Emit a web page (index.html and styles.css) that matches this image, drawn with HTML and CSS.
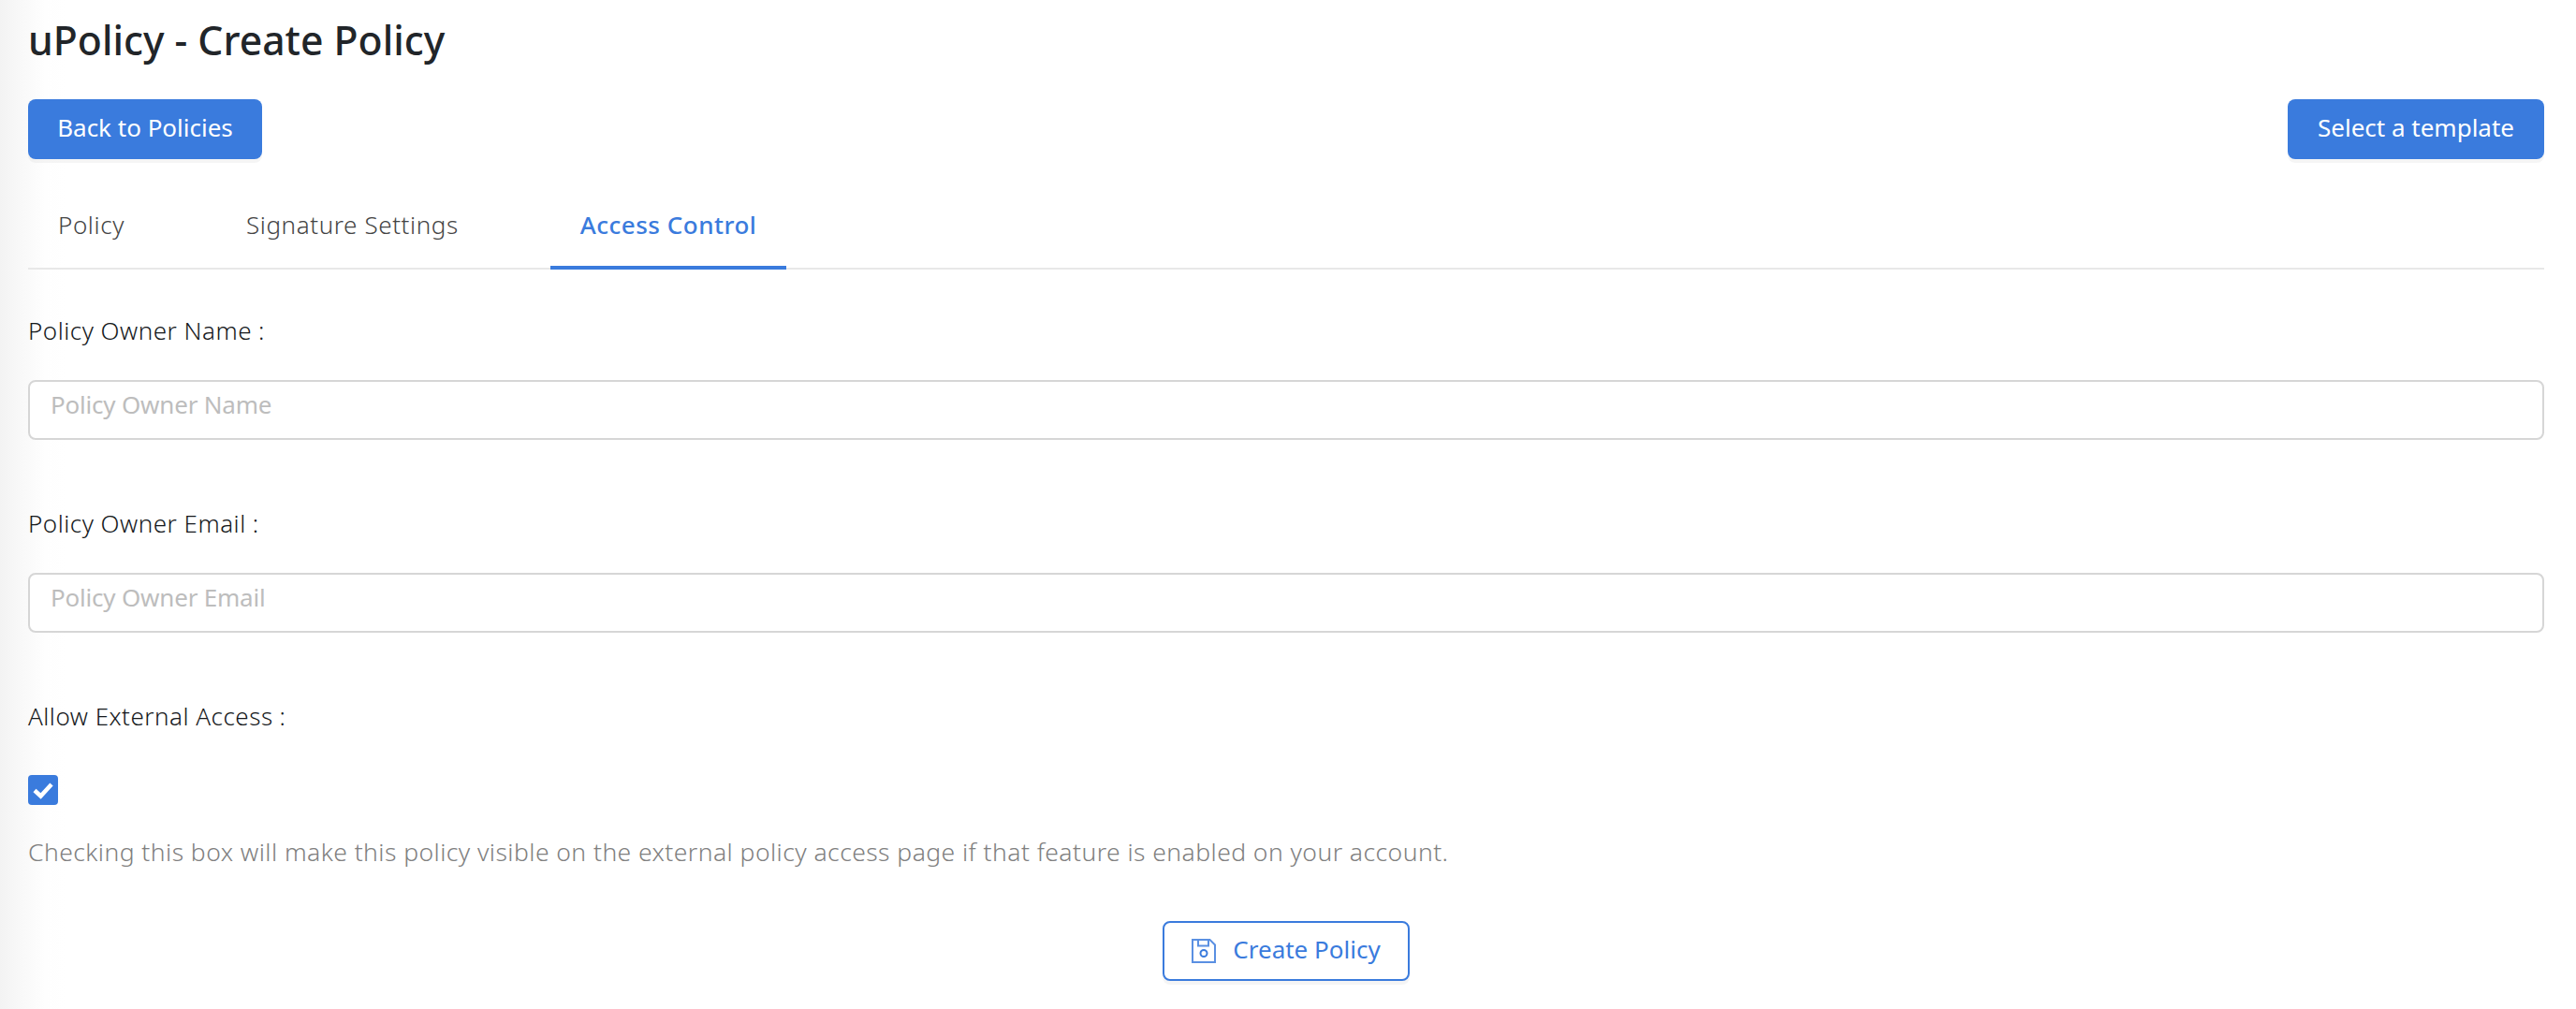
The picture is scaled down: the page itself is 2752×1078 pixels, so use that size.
FILE: index.html
```html
<!DOCTYPE html>
<html lang="en">
<head>
<meta charset="utf-8">
<title>uPolicy - Create Policy</title>
<link rel="stylesheet" href="styles.css">
</head>
<body>
<main class="page">
  <h1 class="title">uPolicy - Create Policy</h1>
  <div class="actions">
    <button class="btn btn-solid btn-back" type="button">Back to Policies</button>
    <button class="btn btn-solid btn-template" type="button">Select a template</button>
  </div>
  <nav class="tabs">
    <a class="tab">Policy</a>
    <a class="tab">Signature Settings</a>
    <a class="tab tab-active">Access Control</a>
  </nav>
  <form class="form">
    <div class="field">
      <label class="label">Policy Owner Name<span class="colon">:</span></label>
      <input class="input" type="text" placeholder="Policy Owner Name">
    </div>
    <div class="field">
      <label class="label">Policy Owner Email<span class="colon">:</span></label>
      <input class="input" type="text" placeholder="Policy Owner Email">
    </div>
    <div class="field field-check">
      <label class="label">Allow External Access<span class="colon">:</span></label>
      <span class="checkbox">
        <svg viewBox="0 0 32 32" width="32" height="32" aria-hidden="true"><path d="M7 16.500l6.500 6L25 10" fill="none" stroke="#fff" stroke-width="4.500"/></svg>
      </span>
      <p class="help">Checking this box will make this policy visible on the external policy access page if that feature is enabled on your account.</p>
    </div>
    <div class="submit-row">
      <button class="btn btn-outline" type="button">
        <svg class="save-icon" viewBox="0 0 26 26" width="26" height="26" aria-hidden="true">
          <path d="M1 1h18.500L25 6.500V25H1z M7 1v6.500h11V1" fill="none" stroke="#5a90e2" stroke-width="2"/>
          <circle cx="13" cy="15.500" r="3.500" fill="none" stroke="#3a7bdd" stroke-width="2"/>
        </svg>
        Create Policy
      </button>
    </div>
  </form>
</main>
</body>
</html>
```
FILE: styles.css
```css
* { box-sizing: border-box; }
html, body { margin: 0; height: 100%; }
body {
  background: linear-gradient(to right, #f3f3f3 0, #f8f8f8 20px, #fefefe 48px, #ffffff 70px);
  font-family: "Noto Sans", "Open Sans", sans-serif;
  font-weight: 300;
  color: #212529;
  overflow: hidden;
}
.page { padding: 0 34px 0 30px; }
.title { margin: 0; padding-top: 16px; height: 106px; font-size: 42.700px; line-height: 54px; font-weight: 500; color: #212529; }
.actions { display: flex; justify-content: space-between; }
.btn { font-family: inherit; font-size: 26px; height: 64px; border-radius: 8px; cursor: pointer; box-shadow: 0 4px 0 rgba(0,0,0,.04); }
.btn-solid { background: #3a7bdd; color: #fff; border: 0; font-weight: 400; padding: 0 0 4px; }
.btn-back { width: 250px; }
.btn-template { width: 274px; }
.tabs { display: flex; gap: 66px; height: 118px; border-bottom: 2px solid #e8e8e8; }
.tab { padding: 52px 32px 0; font-size: 26px; line-height: 36px; letter-spacing: .6px; color: #444; font-weight: 300; }
.tab-active { color: #3a7bdd; font-weight: 500; letter-spacing: .5px; height: 118px; border-bottom: 4px solid #3a7bdd; }
.form { display: block; }
.field { padding-top: 49px; height: 206px; }
.field:first-child { padding-top: 47px; height: 204px; }
.label { display: block; font-size: 26px; line-height: 36px; letter-spacing: .5px; color: #16191c; margin-bottom: 35px; }
.colon { margin-left: 7px; }
.input { display: block; width: 100%; height: 64px; border: 2px solid #d6d6d6; border-radius: 8px; padding: 0 22px 12px; font-family: inherit; font-weight: 400; font-size: 26px; letter-spacing: -.2px; background: #fff; }
.input::placeholder { color: #bdbdbd; opacity: 1; }
.field-check { height: 286px; }
.field-check .label { margin-bottom: 45px; }
.checkbox { display: block; width: 32px; height: 32px; background: #3a7bdd; border-radius: 4px; }
.checkbox svg { display: block; }
.help { margin: 32px 0 0; font-size: 26.500px; line-height: 36px; letter-spacing: .44px; color: #808080; }
.submit-row { display: flex; justify-content: center; }
.btn-outline { display: flex; align-items: center; justify-content: center; gap: 18px; width: 264px; background: #fff; color: #3a7bdd; border: 2px solid #3a7bdd; padding: 0 0 4px; font-weight: 400; }
.save-icon { margin-top: 4px; }
```
